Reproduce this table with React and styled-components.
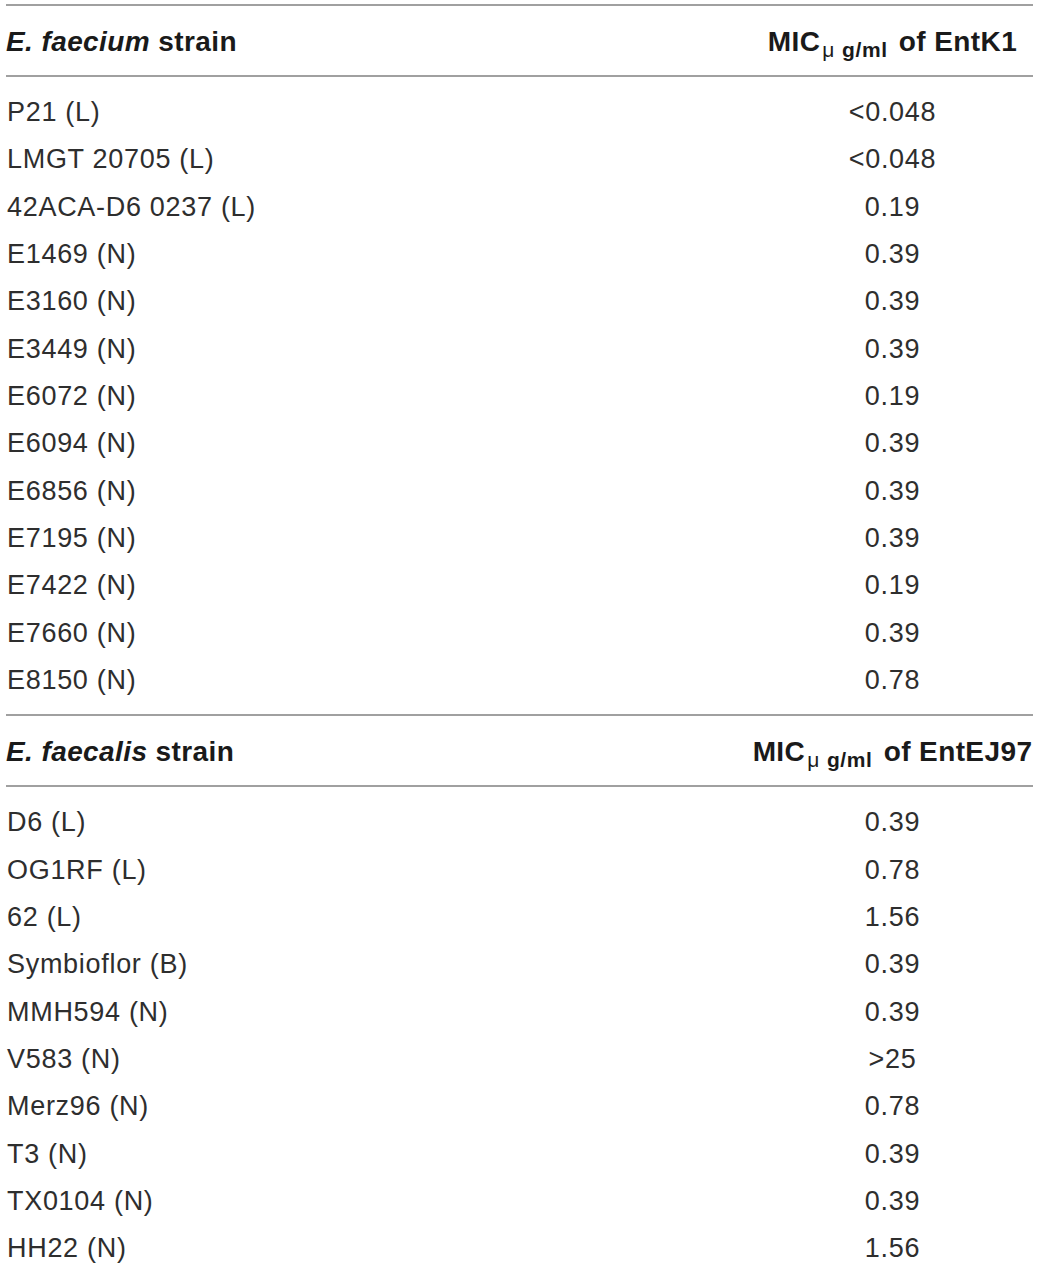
import React from 'react';
import styled, { createGlobalStyle } from 'styled-components';

const GlobalStyle = createGlobalStyle`
  html, body {
    margin: 0;
    padding: 0;
    background: #fff;
  }
  body {
    font-family: "Liberation Sans", Arial, sans-serif;
    color: #231f20;
  }
`;

const Page = styled.div`
  width: 1040px;
  padding: 4px 7px 0 6px;
  box-sizing: border-box;
`;

const Section = styled.section`
  border-top: 2px solid #a0a0a0;
`;

const HeaderRow = styled.div`
  display: grid;
  grid-template-columns: 746px 1fr;
  align-items: center;
  height: 71px;
  padding-top: 3px;
  box-sizing: border-box;
  border-bottom: 2px solid #a0a0a0;
  font-size: 28px;
  font-weight: 700;
  letter-spacing: 0.4px;
  color: #1a1a1a;
`;

const HeadCell = styled.div`
  white-space: nowrap;
  text-align: ${(p) => (p.$center ? 'center' : 'left')};
`;

const Sub = styled.sub`
  font-size: 21px;
  vertical-align: -6px;
  line-height: 0;
  margin: 0 3px 0 2px;
  letter-spacing: 0.6px;
`;

const Mu = styled.span`
  font-weight: 400;
  margin-right: 7px;
`;

const Body = styled.div`
  padding: 10px 0 12px;
`;

const Row = styled.div`
  display: grid;
  grid-template-columns: 746px 1fr;
  align-items: center;
  height: 47.33px;
  padding-top: 4px;
  box-sizing: border-box;
  font-size: 27px;
  letter-spacing: 0.7px;
  color: #2e2e2e;
`;

const NameCell = styled.div`
  padding-left: 1px;
`;

const ValueCell = styled.div`
  text-align: center;
`;

const sections = [
  {
    species: 'E. faecium',
    peptide: 'EntK1',
    rows: [
      ['P21 (L)', '<0.048'],
      ['LMGT 20705 (L)', '<0.048'],
      ['42ACA-D6 0237 (L)', '0.19'],
      ['E1469 (N)', '0.39'],
      ['E3160 (N)', '0.39'],
      ['E3449 (N)', '0.39'],
      ['E6072 (N)', '0.19'],
      ['E6094 (N)', '0.39'],
      ['E6856 (N)', '0.39'],
      ['E7195 (N)', '0.39'],
      ['E7422 (N)', '0.19'],
      ['E7660 (N)', '0.39'],
      ['E8150 (N)', '0.78'],
    ],
  },
  {
    species: 'E. faecalis',
    peptide: 'EntEJ97',
    rows: [
      ['D6 (L)', '0.39'],
      ['OG1RF (L)', '0.78'],
      ['62 (L)', '1.56'],
      ['Symbioflor (B)', '0.39'],
      ['MMH594 (N)', '0.39'],
      ['V583 (N)', '>25'],
      ['Merz96 (N)', '0.78'],
      ['T3 (N)', '0.39'],
      ['TX0104 (N)', '0.39'],
      ['HH22 (N)', '1.56'],
    ],
  },
];

const App = () => {
  return (
    <>
      <GlobalStyle />
      <Page>
        {sections.map((s) => (
          <Section key={s.peptide}>
            <HeaderRow>
              <HeadCell>
                <i>{s.species}</i> strain
              </HeadCell>
              <HeadCell $center>
                MIC
                <Sub>
                  <Mu>μ</Mu>g/ml
                </Sub>{' '}
                of {s.peptide}
              </HeadCell>
            </HeaderRow>
            <Body>
              {s.rows.map(([name, value]) => (
                <Row key={name}>
                  <NameCell>{name}</NameCell>
                  <ValueCell>{value}</ValueCell>
                </Row>
              ))}
            </Body>
          </Section>
        ))}
      </Page>
    </>
  );
};

export default App;
